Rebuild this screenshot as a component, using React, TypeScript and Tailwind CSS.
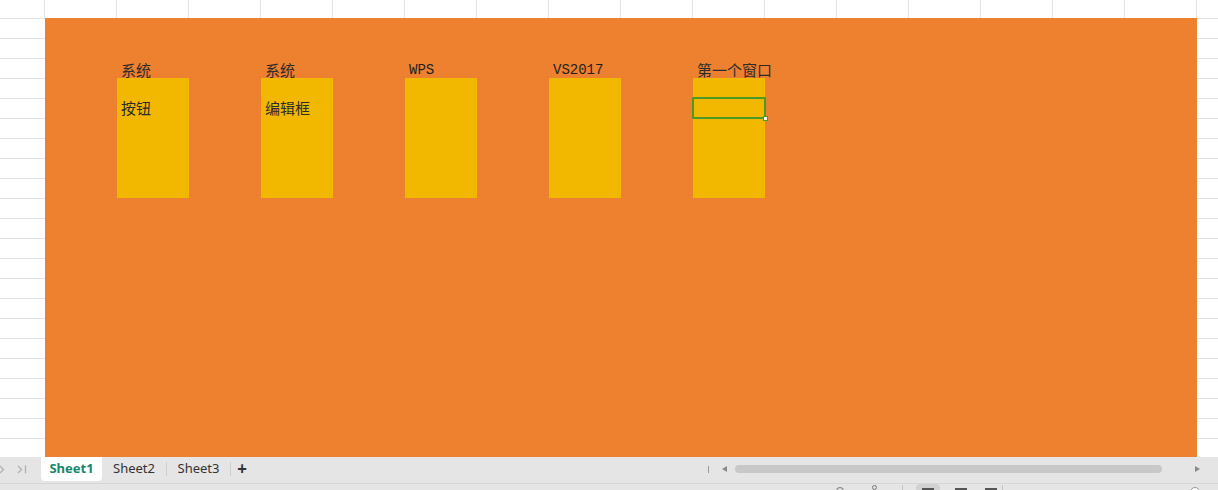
const rows = Array.from({ length: 22 });
const cols = Array.from({ length: 16 });

const items = [
  { head: "系统", body: "按钮", mono: false },
  { head: "系统", body: "编辑框", mono: false },
  { head: "WPS", body: "", mono: true },
  { head: "VS2017", body: "", mono: true },
  { head: "第一个窗口", body: "", mono: false, selected: true },
];

function RowLines({ w }: { w: string }) {
  return (
    <div className={`${w} shrink-0 bg-white overflow-hidden`}>
      {rows.map((_, i) => (
        <div key={i} className="h-[20px] border-t border-[#e3e3e3]" />
      ))}
    </div>
  );
}

function Block({ item }: { item: (typeof items)[number] }) {
  const font = item.mono
    ? "font-['Liberation_Mono',monospace] text-[14px] text-[#1f1f1f]"
    : "font-['Noto_Sans_CJK_SC',sans-serif] text-[15px] text-[#2b2b2b]";
  return (
    <div className="w-[72px] shrink-0">
      <div className={`h-[20px] pl-[4px] pt-[2px] leading-[20px] whitespace-nowrap ${font}`}>
        {item.head}
      </div>
      <div className="relative h-[120px] bg-[#f2b800]">
        <div className="h-[20px]" />
        <div className="h-[20px] pl-[4px] leading-[20px] text-[15px] text-[#2b2b2b] whitespace-nowrap font-['Noto_Sans_CJK_SC',sans-serif]">
          {item.body}
        </div>
        {item.selected && (
          <div className="absolute top-[19px] left-[-1px] w-[74px] h-[22px] border-2 border-[#4b9a24]">
            <div className="absolute right-[-4px] bottom-[-4px] w-[5px] h-[5px] bg-[#f4f4f4] border border-[#4b9a24]" />
          </div>
        )}
      </div>
    </div>
  );
}

export default function App() {
  return (
    <div className="w-[1218px] h-[490px] overflow-hidden bg-white flex flex-col">
      {/* column header strip */}
      <div className="h-[18px] flex shrink-0">
        <div className="w-[45px] shrink-0 border-r border-[#e3e3e3]" />
        {cols.map((_, i) => (
          <div key={i} className="w-[72px] shrink-0 border-r border-[#e3e3e3]" />
        ))}
        <div className="flex-1" />
      </div>

      {/* sheet body */}
      <div className="h-[439px] flex shrink-0">
        <RowLines w="w-[45px]" />
        <div className="w-[1152px] shrink-0 bg-[#ee8130] pl-[72px] pt-[40px] flex gap-[72px] items-start">
          {items.map((it, i) => (
            <Block key={i} item={it} />
          ))}
        </div>
        <RowLines w="flex-1" />
      </div>

      {/* sheet tabs */}
      <div className="h-[26px] shrink-0 bg-[#e5e5e5] flex items-start font-['Noto_Sans',sans-serif] text-[13px]">
        <div className="w-[41px] h-[24px] flex items-center">
          <svg width="6" height="9" viewBox="0 0 6 9" className="ml-[-1px]">
            <path d="M1 1l3.5 3.5L1 8" fill="none" stroke="#b3b3b3" strokeWidth="1.4" />
          </svg>
          <svg width="11" height="9" viewBox="0 0 11 9" className="ml-[12px]">
            <path d="M1 1l3.5 3.5L1 8" fill="none" stroke="#b3b3b3" strokeWidth="1.4" />
            <path d="M8.5 0.5v8" fill="none" stroke="#b3b3b3" strokeWidth="1.4" />
          </svg>
        </div>
        <div className="w-[61px] h-[24px] bg-white rounded-b-[4px] flex items-center justify-center font-bold text-[#17876b]">
          Sheet1
        </div>
        <div className="w-[64px] h-[24px] flex items-center justify-center text-[#333]">Sheet2</div>
        <div className="w-px h-[14px] mt-[5px] bg-[#cfcfcf]" />
        <div className="w-[63px] h-[24px] flex items-center justify-center text-[#333]">Sheet3</div>
        <div className="w-px h-[14px] mt-[5px] bg-[#cfcfcf]" />
        <div className="w-[22px] h-[24px] flex items-center justify-center text-[#333] font-bold text-[17px]">+</div>

        <div className="ml-[455px] h-[24px] flex items-center">
          <div className="w-px h-[7px] bg-[#9a9a9a]" />
          <div className="ml-[13px] w-0 h-0 border-y-[3px] border-y-transparent border-r-[5px] border-r-[#8a8a8a]" />
          <div className="ml-[8px] w-[427px] h-[8px] rounded-full bg-[#c8c8c8]" />
          <div className="ml-[33px] w-0 h-0 border-y-[3px] border-y-transparent border-l-[5px] border-l-[#8a8a8a]" />
        </div>
      </div>

      {/* status bar (mostly cut off) */}
      <div className="flex-1 border-t border-[#d6d6d6] bg-[#e5e5e5] relative overflow-hidden">
        <div className="absolute left-[836px] top-[3px] w-[8px] h-[8px] rounded-full border border-[#777]" />
        <div className="absolute left-[872px] top-[1px] w-[5px] h-[5px] rounded-full border border-[#777]" />
        <div className="absolute left-[902px] top-[1px] w-px h-[10px] bg-[#c4c4c4]" />
        <div className="absolute left-[916px] top-[0px] w-[24px] h-[12px] rounded-t-[4px] bg-[#d2d2d2]" />
        <div className="absolute left-[922px] top-[4px] w-[12px] h-[2px] bg-[#555]" />
        <div className="absolute left-[955px] top-[4px] w-[12px] h-[2px] bg-[#555]" />
        <div className="absolute left-[985px] top-[4px] w-[12px] h-[2px] bg-[#555]" />
        <div className="absolute left-[1002px] top-[1px] w-px h-[10px] bg-[#c4c4c4]" />
        <div className="absolute left-[1190px] top-[3px] w-[10px] h-[10px] rounded-full bg-white border border-[#999]" />
      </div>
    </div>
  );
}
